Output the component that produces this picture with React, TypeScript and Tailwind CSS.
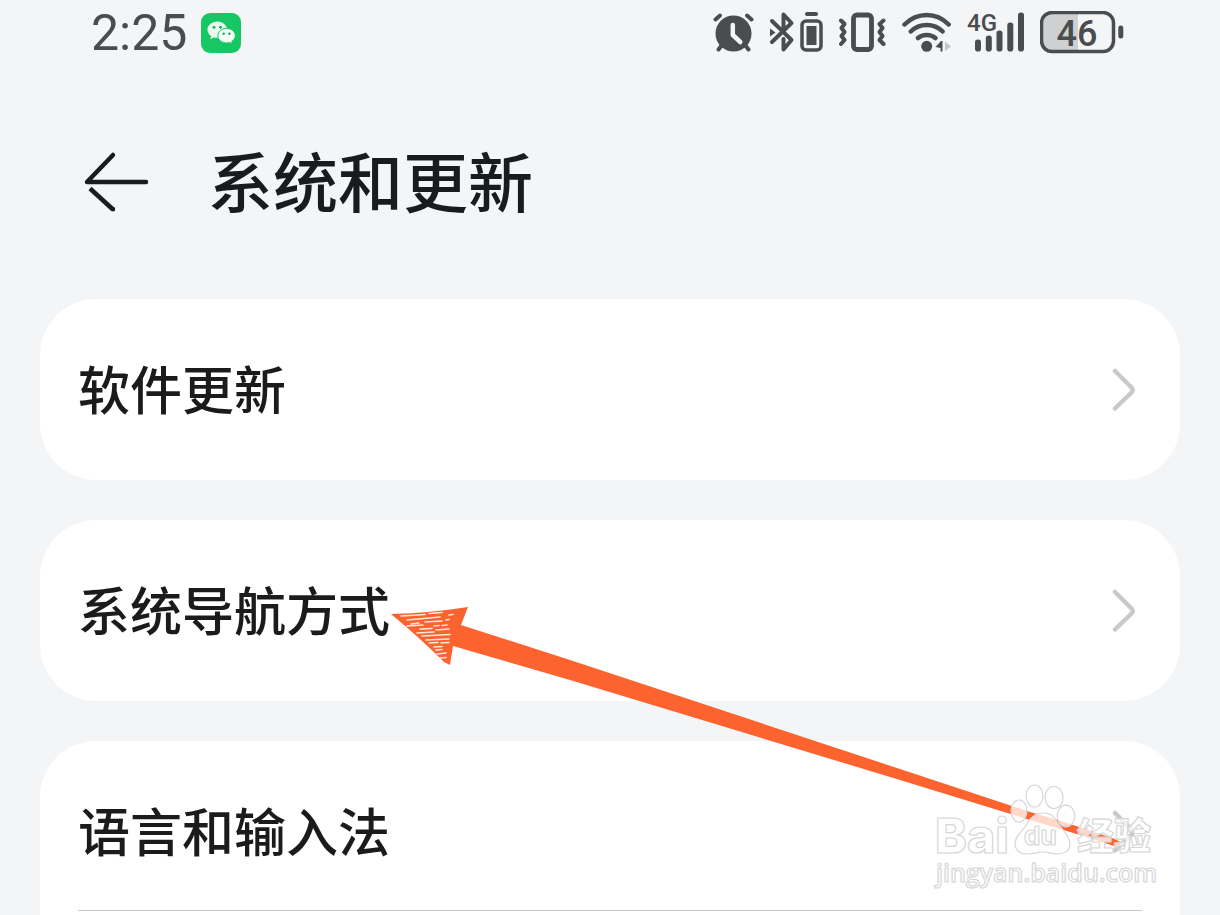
import type { ReactNode } from 'react'

type Item = { id: string; label: string }

const GROUPS: Item[][] = [
  [{ id: 'update', label: '软件更新' }],
  [{ id: 'navigation', label: '系统导航方式' }],
  [{ id: 'language', label: '语言和输入法' }],
]

export default function App() {
  return (
    <div className="relative flex min-h-screen flex-col overflow-hidden bg-[#f3f5f7] font-['Noto_Sans_CJK_SC',sans-serif] text-[#1a1b1d]">
      <StatusBar />

      <header className="flex h-[233px] items-center gap-[58px] pl-[84px]">
        <button type="button" aria-label="返回">
          <BackIcon />
        </button>
        <h1 className="pb-1.5 text-[65px] leading-none font-medium">
          系统和更新
        </h1>
      </header>

      <main className="flex grow flex-col gap-10 px-10">
        {GROUPS.map((items, i) => (
          <Group key={items[0].id} last={i === GROUPS.length - 1}>
            {items.map((item) => (
              <Row key={item.id} label={item.label} />
            ))}
          </Group>
        ))}
      </main>

      <PointerArrow />
      <Watermark />
    </div>
  )
}

function Group({ last, children }: { last: boolean; children: ReactNode }) {
  return (
    <section
      className={
        last
          ? 'grow rounded-t-[56px] bg-white pt-[11px] [&_a]:border-[#c9cacc]'
          : 'rounded-[56px] bg-white py-[11px]'
      }
    >
      {children}
    </section>
  )
}

function Row({ label }: { label: string }) {
  return (
    <a
      href="#"
      className="mx-[38px] flex h-[159px] items-center justify-between border-b border-transparent pr-1.5"
    >
      <span className="pb-0.5 text-[52px] leading-none font-medium">{label}</span>
      <svg
        width="24"
        height="44"
        viewBox="0 0 24 44"
        fill="none"
        stroke="#c9c9ca"
        strokeWidth="4.5"
        strokeLinecap="round"
        strokeLinejoin="round"
      >
        <path d="M3 4 20 21Q21.500 23 20 25L3 41.500" />
      </svg>
    </a>
  )
}

function StatusBar() {
  return (
    <div className="flex h-[66px] items-center justify-between pr-[96px] pl-[91px] font-[Roboto,sans-serif] text-[#4b4c4e]">
      <div className="flex items-center gap-[14px]">
        <time className="w-[96px] text-[50px] leading-none">2:25</time>
        <WeChatIcon />
      </div>
      <div className="flex items-center gap-4">
        <AlarmIcon />
        <BluetoothIcon />
        <VibrateIcon />
        <WifiIcon />
        <SignalIcon />
        <BatteryIcon />
      </div>
    </div>
  )
}

function WeChatIcon() {
  return (
    <svg width="40" height="40" viewBox="0 0 40 40">
      <rect width="40" height="40" rx="9" fill="#16c764" />
      <path
        d="M16.300 8.500c-5.600 0-9.800 3.700-9.800 8.300 0 2.600 1.400 4.900 3.700 6.400l-.9 3 3.500-1.800c1.100.3 2.300.5 3.500.5 5.500 0 9.700-3.600 9.700-8.100 0-4.600-4.200-8.300-9.700-8.300z"
        fill="#e6faee"
      />
      <path
        d="M25.600 15.400c-4.900 0-8.700 3.200-8.700 7.300s3.800 7.300 8.700 7.300c1.100 0 2.100-.2 3-.4l2.900 1.500-.8-2.600c2.200-1.400 3.600-3.400 3.600-5.800 0-4.100-3.800-7.300-8.700-7.300z"
        fill="#f2fdf6"
        stroke="#16c764"
        strokeWidth="1"
      />
      <g fill="#16a955">
        <circle cx="13" cy="14.300" r="1.400" />
        <circle cx="19.500" cy="14.300" r="1.400" />
        <circle cx="22.700" cy="20.700" r="1.200" />
        <circle cx="28.500" cy="20.700" r="1.200" />
      </g>
    </svg>
  )
}

function AlarmIcon() {
  return (
    <svg
      width="41"
      height="44"
      viewBox="0 0 41 44"
      fill="none"
      stroke="currentColor"
      strokeWidth="4"
      strokeLinecap="round"
      strokeLinejoin="round"
    >
      <circle cx="20.500" cy="22.500" r="18" fill="currentColor" stroke="none" />
      <path d="M2.500 8.500 7 4.500M34 4.500l4.500 4M5.500 38.500 9 34M35.500 38.500 32 34" />
      <path d="M19.800 14v10l7.500 7" stroke="#f3f5f7" strokeWidth="4.500" />
    </svg>
  )
}

function BluetoothIcon() {
  return (
    <svg
      className="overflow-visible"
      width="52"
      height="44"
      viewBox="0 0 52 44"
      fill="none"
      stroke="currentColor"
      strokeWidth="4"
      strokeLinecap="round"
      strokeLinejoin="round"
    >
      <path d="M2 10 21.500 29 13.500 38.500V28M13.500 16V3.500L21.500 12 2 31" />
      <path d="M0 17.500 5.500 21.500 0 25.500z" fill="currentColor" stroke="none" />
      <rect x="32" y="10" width="19" height="29" rx="4" strokeWidth="3.500" />
      <rect x="36.500" y="15" width="10" height="19" fill="currentColor" stroke="none" />
      <path d="M37 3h9" />
    </svg>
  )
}

function VibrateIcon() {
  return (
    <svg
      width="48"
      height="44"
      viewBox="0 0 48 44"
      fill="none"
      stroke="currentColor"
      strokeWidth="4"
      strokeLinecap="round"
      strokeLinejoin="round"
    >
      <rect x="15.500" y="4" width="18" height="34.500" rx="3.500" strokeWidth="4.800" />
      <path d="M3 9.500 6.500 13 3.500 17 6.500 21 3.500 25 6.500 29 3 33M45.500 9.500 41.500 13l3 4-3 4 3 4-3 4 4 4" />
    </svg>
  )
}

function WifiIcon() {
  return (
    <svg
      width="49"
      height="44"
      viewBox="0 0 49 44"
      fill="none"
      stroke="currentColor"
      strokeWidth="4.500"
      strokeLinecap="round"
    >
      <path d="M2.500 13.500Q12 4 24.700 4t22 9.500M8.800 20.500q6.500-6.500 15.900-6.500t15.900 6.500M16 27q3.500-3 8.700-3t8.700 3" />
      <circle cx="24.700" cy="35.300" r="5.500" fill="currentColor" stroke="none" />
      <path d="M33.500 36 39 30h1.500v10.500h-2V37z" fill="currentColor" stroke="none" />
      <path d="M43 30.500 49 35.300 43 40z" fill="#c4c5c7" stroke="none" />
    </svg>
  )
}

function SignalIcon() {
  return (
    <svg
      className="overflow-visible"
      width="57"
      height="44"
      viewBox="0 0 57 44"
      fill="currentColor"
    >
      <text x="0" y="20" fontSize="24" fontWeight="500">
        4G
      </text>
      <rect x="8" y="28.500" width="6" height="12" rx="2.800" />
      <rect x="18.800" y="24.500" width="6" height="16" rx="2.800" />
      <rect x="29.500" y="19.500" width="6" height="21" rx="2.800" />
      <rect x="40.300" y="11.500" width="6" height="29" rx="2.800" />
      <rect x="51" y="1.500" width="6" height="39" rx="2.800" />
    </svg>
  )
}

function BatteryIcon() {
  return (
    <svg width="84" height="44" viewBox="0 0 84 44" fill="currentColor">
      <path d="M38 2H12A10 10 0 0 0 2 12v18a10 10 0 0 0 10 10h26z" fill="#cfd0d2" />
      <rect
        x="1.500"
        y="1.500"
        width="72"
        height="39"
        rx="10.500"
        fill="none"
        stroke="currentColor"
        strokeWidth="3.500"
      />
      <rect x="78.300" y="14.500" width="5" height="13" rx="2.500" />
      <text x="37" y="35" fontSize="36" fontWeight="500" textAnchor="middle">
        46
      </text>
    </svg>
  )
}

function BackIcon() {
  return (
    <svg
      width="66"
      height="64"
      viewBox="0 0 66 64"
      fill="none"
      stroke="currentColor"
      strokeWidth="4.500"
      strokeLinecap="round"
      strokeLinejoin="round"
    >
      <path d="M62 31H3L29 4" />
      <path d="M29 58.500 6 37.500" strokeLinecap="butt" />
      <circle cx="29" cy="58.300" r="1" fill="currentColor" strokeWidth="2.500" />
    </svg>
  )
}

// Hand-drawn arrow pointing at the navigation row
function PointerArrow() {
  return (
    <svg
      className="pointer-events-none absolute top-[600px] left-[390px]"
      width="740"
      height="250"
      viewBox="0 0 740 250"
      aria-hidden
    >
      <path
        d="M1 14Q40 13 78 7L71 25 180 60 510 169 640 212 668 220 725 239 732 243 727 247 700 238 640 220 510 180 180 80 63 46 60 65 54 62Q30 38 1 14z"
        fill="#fd632f"
      />
      <g stroke="#ffe6dc" strokeWidth="1.600" strokeLinecap="round">
        <path d="M11 16 35 14.500M39 13.500 52 12.500M17 20 50 17M21 24l8-1M35 22l17-1M59 15l4-.5M56 20l3-.5M17 26l16-1M44 26l5-.5M52 25.500l5-.5M30 29l12-.5M46 30l13-1M27 33l17-1M32 36l28-1.500M36 40l23-1M39 43l9-.5M51 43l8-.5M44 47l8-.5M46 50l6-.5M47 54l9-1M49 58l7-.5" />
      </g>
    </svg>
  )
}

function Watermark() {
  return (
    <svg
      className="pointer-events-none absolute top-[780px] right-[60px]"
      width="230"
      height="115"
      viewBox="0 0 230 115"
      fill="#fff"
      fillOpacity="0.75"
      stroke="#d6d6d8"
      strokeWidth="1.200"
      strokeLinejoin="round"
    >
      <ellipse cx="89" cy="31" rx="8" ry="11" />
      <ellipse cx="104.500" cy="16" rx="8.500" ry="11" />
      <ellipse cx="124" cy="17.500" rx="9" ry="11" />
      <ellipse cx="136" cy="36" rx="8.800" ry="10.800" />
      <path d="M113 33c9 0 12 5 15 10 4 7 12 12 12 21 0 7-6 10-12 10-6 0-10-2-15-2s-9 2-16 2c-7 0-12-4-12-10 0-9 8-13 12-20 3-6 7-11 16-11z" />
      <text x="5" y="73" fontFamily="Inter, sans-serif" fontSize="48" fontWeight="800">
        Bai
      </text>
      <text x="94" y="65" fontFamily="Inter, sans-serif" fontSize="26" fontWeight="700">
        du
      </text>
      <text
        x="147"
        y="70"
        fontFamily="Noto Sans CJK SC, sans-serif"
        fontSize="37"
        fontWeight="900"
      >
        经验
      </text>
      <text x="6" y="102" fontFamily="Open Sans, sans-serif" fontSize="25" fontWeight="600">
        jingyan.baidu.com
      </text>
    </svg>
  )
}
